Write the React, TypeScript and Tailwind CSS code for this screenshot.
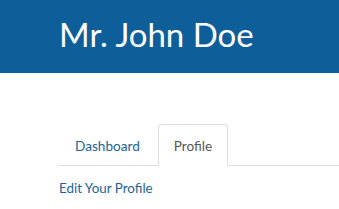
export default function App() {
  return (
    <div className="min-h-screen bg-white font-['Lato','Liberation_Sans',sans-serif]">
      <header className="h-[73px] bg-[#0e5f99] pl-[59px] pt-[14px]">
        <h1 className="text-[33px] leading-[40px] text-white">Mr. John Doe</h1>
      </header>
      <div className="pl-[59px] pt-[51px]">
        <nav className="flex border-b border-[#dddddd] text-[13.6px]">
          <a className="mr-[2px] mb-[-1px] border border-transparent px-[15px] pt-[12px] pb-[10px] leading-[18px] text-[#1d649b]" href="#">
            Dashboard
          </a>
          <a className="mb-[-1px] rounded-t-[4px] border border-[#dddddd] border-b-white bg-white px-[15px] pt-[12px] pb-[10px] leading-[18px] text-[#555555]" href="#">
            Profile
          </a>
        </nav>
        <a className="mt-[13px] block text-[13.4px] leading-[18px] text-[#1d649b]" href="#">
          Edit Your Profile
        </a>
      </div>
    </div>
  );
}
